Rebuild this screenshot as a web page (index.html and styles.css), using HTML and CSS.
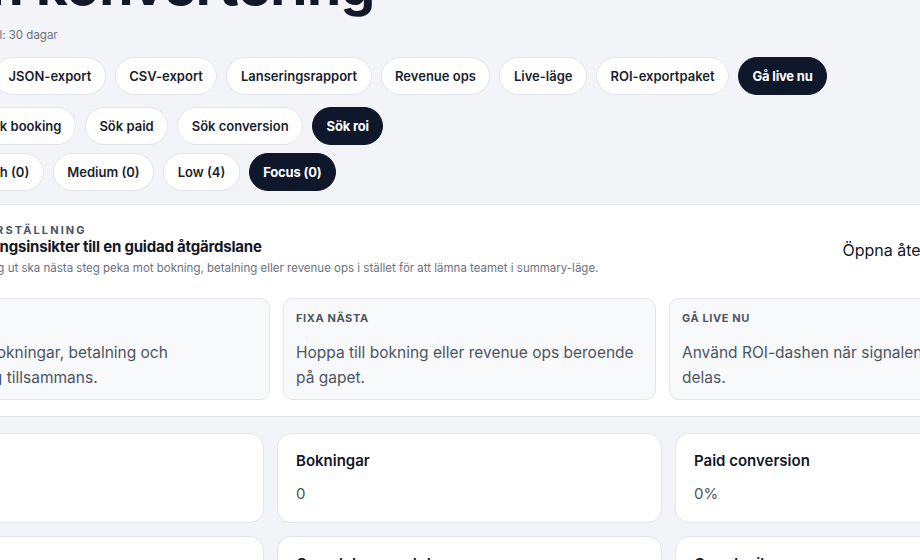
FILE: index.html
```html
<!DOCTYPE html>
<html lang="sv">
<head>
  <meta charset="UTF-8" />
  <meta name="viewport" content="width=device-width, initial-scale=1.0"/>
  <title>Din konvertering</title>
  <link rel="stylesheet" href="styles.css">
</head>
<body>
  <div class="page">

    <section class="top">
      <div class="title-row">
        <div class="title-icon">
          <svg width="22" height="22" viewBox="0 0 24 24" fill="none" stroke="white" stroke-width="2" stroke-linecap="round" stroke-linejoin="round">
            <path d="M4 19V11M10 19V5M16 19v-6M22 19H2"/>
          </svg>
        </div>
        <div>
          <h1>Din konvertering</h1>
          <div class="meta">Tidsintervall: 30 dagar</div>
        </div>
      </div>

      <div class="chip-row row-actions">
        <span class="row-label">Exportera</span>
        <button class="chip">JSON-export</button>
        <button class="chip">CSV-export</button>
        <button class="chip">Lanseringsrapport</button>
        <button class="chip">Revenue ops</button>
        <button class="chip">Live-läge</button>
        <button class="chip">ROI-exportpaket</button>
        <button class="chip dark">Gå live nu</button>
      </div>

      <div class="chip-row row-search">
        <span class="row-label">Sök</span>
        <button class="chip">Sök booking</button>
        <button class="chip">Sök paid</button>
        <button class="chip">Sök conversion</button>
        <button class="chip dark">Sök roi</button>
      </div>

      <div class="chip-row row-prio">
        <span class="row-label">Prioritet</span>
        <button class="chip">High (0)</button>
        <button class="chip">Medium (0)</button>
        <button class="chip">Low (4)</button>
        <button class="chip dark">Focus (0)</button>
      </div>
    </section>

    <section class="panel">
      <div class="panel-head">
        <div>
          <div class="eyebrow">Vägledd återställning</div>
          <h2>Gör konverteringsinsikter till en guidad åtgärdslane</h2>
          <p class="panel-desc">Om signalen ser låg ut ska nästa steg peka mot bokning, betalning eller revenue ops i stället för att lämna teamet i summary-läge.</p>
        </div>
        <a href="#" class="panel-link">Öppna återställningsflödet</a>
      </div>

      <div class="steps">
        <div class="step">
          <div class="step-label">Läs läget</div>
          <p>Utvärdera bokningar, betalning och konvertering tillsammans.</p>
        </div>
        <div class="step">
          <div class="step-label">Fixa nästa</div>
          <p>Hoppa till bokning eller revenue ops beroende på gapet.</p>
        </div>
        <div class="step">
          <div class="step-label">Gå live nu</div>
          <p>Använd ROI-dashen när signalen är redo att delas.</p>
        </div>
      </div>
    </section>

    <section class="metrics">
      <div class="metric">
        <h3>Förfrågningar</h3>
        <div class="value">4</div>
      </div>
      <div class="metric">
        <h3>Bokningar</h3>
        <div class="value">0</div>
      </div>
      <div class="metric">
        <h3>Paid conversion</h3>
        <div class="value">0%</div>
      </div>
      <div class="metric">
        <h3>Launch readiness</h3>
        <div class="value">Låg</div>
      </div>
      <div class="metric">
        <h3>Completeness state</h3>
        <div class="value">Delvis</div>
      </div>
      <div class="metric">
        <h3>Guard rail</h3>
        <div class="value">Aktiv</div>
      </div>
    </section>

  </div>
</body>
</html>
```

FILE: styles.css
```css
body {
  margin: 0;
  font-family: Inter, 'Noto Sans', sans-serif;
  background-color: #f3f4f8;
  color: #111827;
  overflow: hidden;
}

.page {
  width: 1181px;
  margin: -43px 0 0 -121px;
}

/* header + filter chips */
.top {
  padding-bottom: 13px;
}

.title-row {
  display: flex;
  gap: 13px;
}

.title-icon {
  width: 44px;
  height: 44px;
  margin-top: 8px;
  border-radius: 12px;
  background-color: #0f172a;
  display: flex;
  align-items: center;
  justify-content: center;
}

h1 {
  margin: 0;
  font-size: 55px;
  line-height: 56px;
  font-weight: 700;
  letter-spacing: -0.5px;
  color: #111827;
}

.meta {
  margin-top: 13px;
  font-size: 11.5px;
  line-height: 18px;
  color: #6b7280;
}

.chip-row {
  display: flex;
  align-items: center;
  gap: 9px;
}

.row-actions {
  margin-top: 13px;
}

.row-search {
  margin-top: 12px;
}

.row-prio {
  margin-top: 8px;
}

.row-label {
  font-size: 12px;
  color: #6b7280;
}

.row-actions .row-label {
  width: 106px;
}

.row-search .row-label {
  width: 81px;
}

.row-prio .row-label {
  width: 76px;
}

.chip {
  height: 38px;
  padding: 0 13.5px;
  border: 1px solid #e2e5eb;
  border-radius: 19px;
  background-color: white;
  font-family: inherit;
  font-size: 13px;
  font-weight: 600;
  color: #1a1f2e;
  white-space: nowrap;
  cursor: pointer;
}

.chip.dark {
  background-color: #0f172a;
  border-color: #0f172a;
  color: white;
  font-weight: 700;
  letter-spacing: -0.2px;
}

/* recovery panel */
.panel {
  background-color: white;
  border-top: 1px solid #e5e7eb;
  border-bottom: 1px solid #e5e7eb;
  padding: 18px 18px 16px;
}

.panel-head {
  display: flex;
  align-items: center;
  justify-content: space-between;
}

.eyebrow {
  font-size: 11px;
  line-height: 14px;
  font-weight: 700;
  letter-spacing: 2.1px;
  text-transform: uppercase;
  color: #4b5563;
}

h2 {
  margin: 0;
  font-size: 15px;
  line-height: 20px;
  font-weight: 700;
  letter-spacing: -0.2px;
  color: #111827;
}

.panel-desc {
  margin: 3px 0 0;
  font-size: 11.5px;
  line-height: 16px;
  color: #6b7280;
}

.panel-link {
  font-size: 16px;
  color: #111827;
  text-decoration: none;
}

.steps {
  display: grid;
  grid-template-columns: repeat(3, 1fr);
  gap: 13px;
  margin-top: 22px;
}

.step {
  background-color: #f8f9fb;
  border: 1px solid #e5e7eb;
  border-radius: 10px;
  padding: 12px 12px 9px;
}

.step-label {
  font-size: 11px;
  line-height: 14px;
  font-weight: 700;
  letter-spacing: 0.6px;
  text-transform: uppercase;
  color: #4b5563;
}

.step p {
  margin: 15px 0 0;
  font-size: 15.5px;
  line-height: 25px;
  color: #4b5563;
}

/* metric cards */
.metrics {
  display: grid;
  grid-template-columns: repeat(3, 1fr);
  gap: 13px;
  margin-top: 16px;
}

.metric {
  background-color: white;
  border: 1px solid #e2e5eb;
  border-radius: 14px;
  padding: 17px 18px 18px;
}

h3 {
  margin: 0;
  font-size: 15px;
  line-height: 20px;
  font-weight: 600;
  color: #111827;
}

.value {
  margin-top: 13px;
  font-size: 15px;
  line-height: 20px;
  color: #4b5563;
}
```
